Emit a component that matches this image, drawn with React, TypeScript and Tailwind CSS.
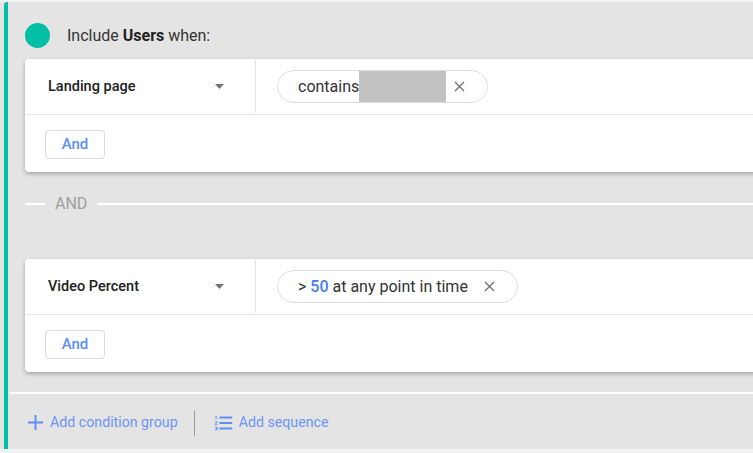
import React from 'react';

const font = { fontFamily: 'Roboto, "Liberation Sans", sans-serif' };

function Caret() {
  return (
    <svg width="9" height="5" viewBox="0 0 9 5" className="shrink-0">
      <path d="M0 0h9L4.5 5z" fill="#757575" />
    </svg>
  );
}

function Close() {
  return (
    <svg width="11" height="11" viewBox="0 0 11 11" className="shrink-0">
      <path d="M1 1l9 9M10 1l-9 9" stroke="#757575" strokeWidth="1.4" />
    </svg>
  );
}

function ConditionCard({ field, children }: { field: string; children: React.ReactNode }) {
  return (
    <div className="w-[760px] bg-white rounded-[4px] shadow-[0_2px_4px_rgba(0,0,0,0.28)]">
      <div className="flex h-[56px] border-b border-[#e6e6e6]">
        <div className="w-[231px] flex items-center justify-between pl-[23px] pr-[31px] border-r border-[#e3e3e3] my-[1px]">
          <span className="text-[14.5px] font-medium text-[#212121]">{field}</span>
          <Caret />
        </div>
        <div className="flex items-center pl-[21px]">{children}</div>
      </div>
      <div className="h-[57px] flex items-center pl-[20px] pt-[1px]">
        <button className="w-[60px] h-[29px] border border-[#dcdcdc] rounded-[4px] text-[15px] font-medium text-[#5a8df3]">
          And
        </button>
      </div>
    </div>
  );
}

export default function App() {
  return (
    <div className="h-[453px] bg-[#f1f1f1] pt-[2px] overflow-hidden" style={font}>
      <div className="h-[447px] bg-[#e4e4e4] pl-1 overflow-hidden">
        <div className="h-full border-l-4 border-[#00bfa5] rounded-tl-[3px] flex flex-col">
          <div className="pl-[17px] pt-[21px]">
            <div className="flex items-center h-[25px]">
              <div className="w-[25px] h-[25px] rounded-full bg-[#00bfa5]" />
              <span className="ml-[17px] text-[16px] text-[#333]">
                Include <span className="font-bold text-[#222]">Users</span> when:
              </span>
            </div>
            <div className="mt-[11px]">
              <ConditionCard field="Landing page">
                <div className="flex items-center h-[33px] border border-[#dedede] rounded-full pl-[20px] pr-[22px]">
                  <span className="text-[16px] text-[#333]">contains</span>
                  <span className="w-[87px] h-[31px] bg-[#c2c2c2]" />
                  <span className="ml-[8px]">
                    <Close />
                  </span>
                </div>
              </ConditionCard>
            </div>
            <div className="flex items-center h-[20px] mt-[22px]">
              <div className="w-[20px] h-[2px] bg-white" />
              <span className="ml-[10px] mr-[10px] text-[16px] text-[#9e9e9e]">AND</span>
              <div className="flex-1 h-[2px] bg-white" />
            </div>
            <div className="mt-[45px]">
              <ConditionCard field="Video Percent">
                <div className="flex items-center h-[33px] border border-[#dedede] rounded-full pl-[20px] pr-[22px]">
                  <span className="text-[16px] text-[#333]">
                    &gt; <span className="font-medium text-[#3f7ff0]">50</span> at any point in time
                  </span>
                  <span className="ml-[16px]">
                    <Close />
                  </span>
                </div>
              </ConditionCard>
            </div>
          </div>
          <div className="mt-[20px] ml-[2px] h-[2px] bg-white" />
          <div className="flex-1 flex items-center pl-[20px] pt-[2px]">
            <button className="flex items-center text-[14.2px] text-[#6b96f3]">
              <svg width="15" height="15" viewBox="0 0 15 15">
                <path d="M7.5 0v15M0 7.5h15" stroke="#5f8ff2" strokeWidth="2" />
              </svg>
              <span className="ml-[7px]">Add condition group</span>
            </button>
            <div className="ml-[16px] w-px h-[26px] bg-[#9e9e9e]" />
            <button className="ml-[18px] flex items-center text-[14.2px] text-[#6b96f3]">
              <svg width="22" height="22" viewBox="0 0 24 24" fill="#5f8ff2">
                <path d="M2 17h2v.5H3v1h1v.5H2v1h3v-4H2v1zm1-9h1V4H2v1h1v3zm-1 3h1.8L2 13.1v.9h3v-1H3.2L5 10.9V10H2v1zm5-6v2h14V5H7zm0 14h14v-2H7v2zm0-6h14v-2H7v2z" />
              </svg>
              <span className="ml-[4px]">Add sequence</span>
            </button>
          </div>
        </div>
      </div>
    </div>
  );
}
